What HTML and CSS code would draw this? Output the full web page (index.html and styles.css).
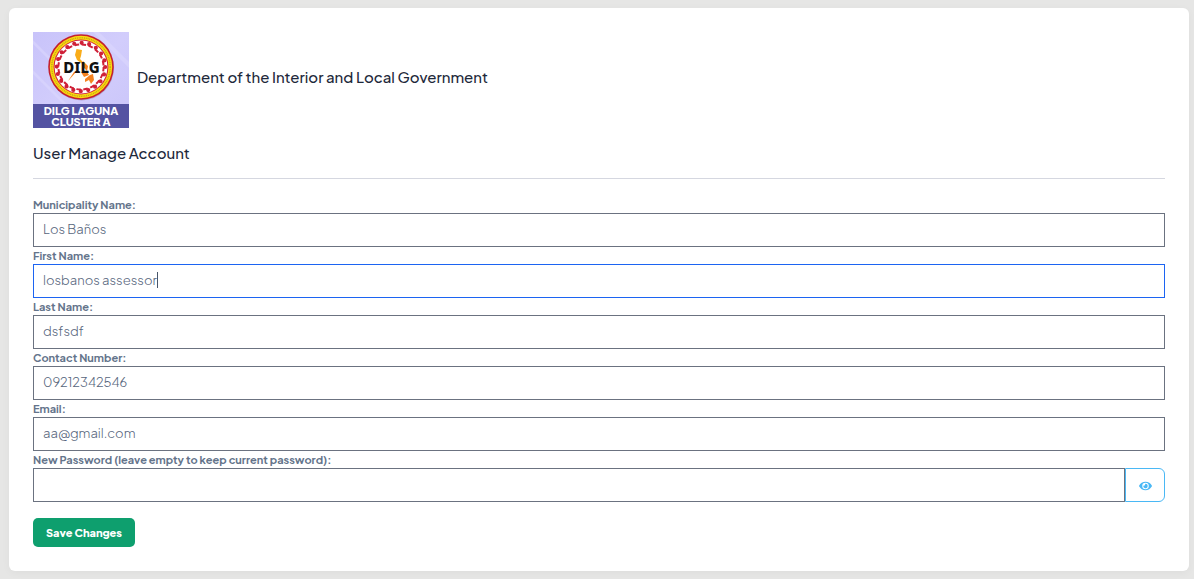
FILE: index.html
```
<!DOCTYPE html>
<html lang="en">
<head>
<meta charset="utf-8">
<meta name="viewport" content="width=device-width, initial-scale=1">
<title>User Manage Account</title>
<link rel="stylesheet" href="styles.css">
</head>
<body>
<main class="card">
  <header class="brand">
    <svg class="logo" viewBox="0 0 96 96" role="img" aria-label="DILG Laguna Cluster A">
      <defs>
        <linearGradient id="bg" x1="0" y1="0" x2="1" y2="1">
          <stop offset="0" stop-color="#c8c3fa"/>
          <stop offset=".5" stop-color="#d2cdfc"/>
          <stop offset="1" stop-color="#cac5f9"/>
        </linearGradient>
      </defs>
      <rect width="96" height="96" fill="url(#bg)"/>
      <path d="M0 38L34 72H30L0 42ZM60 0L96 36V30L66 0ZM0 12L20 32V28L0 8Z" fill="#dedafe" opacity=".5"/>
      <circle cx="48.500" cy="36" r="32.500" fill="#7d6f9c" opacity=".4"/>
      <circle cx="48" cy="35" r="32.800" fill="#c4202f"/>
      <circle cx="48" cy="35" r="31.200" fill="#fbd90f"/>
      <circle cx="48" cy="35" r="29.200" fill="none" stroke="#8c7420" stroke-width="1.400" stroke-dasharray="1 .8" opacity=".5"/>
      <circle cx="48" cy="35" r="27.400" fill="#d0213a"/>
      <circle cx="48" cy="35" r="26.400" fill="#fff"/>
      <circle cx="48" cy="35" r="24.200" fill="none" stroke="#cf2038" stroke-width="4.200" stroke-linecap="round" stroke-dasharray="0 7.600"/>
      <circle cx="48" cy="35" r="22.600" fill="none" stroke="#cf2038" stroke-width="2" stroke-dasharray="4.500 2.600"/>
      <path d="M43.500 17L49 18L48 24L47 27L50 30L52 33L48 31L44 28L42 23Z" fill="#f9ac19"/>
      <path d="M50 29L55 34L54 39L51 36ZM43 40L36 48L35 49L41 40ZM48 40L54 40L56 43L51 45ZM52 47L57 43L60 42L61 48L58 52L56 48L52 50Z" fill="#f58220"/>
      <text x="48.500" y="40.500" text-anchor="middle" class="logo-seal">DILG</text>
      <rect y="72" width="96" height="24" fill="#5453a2"/>
      <text x="48" y="83" text-anchor="middle" class="logo-name">DILG LAGUNA</text>
      <text x="48" y="94" text-anchor="middle" class="logo-name">CLUSTER A</text>
    </svg>
    <h1 class="title">Department of the Interior and Local Government</h1>
  </header>
  <h2 class="title section-title">User Manage Account</h2>
  <form class="form">
    <label class="label" for="municipality">Municipality Name:</label>
    <input class="input" id="municipality" type="text" value="Los Baños">
    <label class="label" for="first">First Name:</label>
    <div class="active-field">
      <input class="input input-active" id="first" type="text" value="losbanos assessor">
      <span class="caret" aria-hidden="true"></span>
    </div>
    <label class="label" for="last">Last Name:</label>
    <input class="input" id="last" type="text" value="dsfsdf">
    <label class="label" for="contact">Contact Number:</label>
    <input class="input" id="contact" type="tel" value="09212342546">
    <label class="label" for="email">Email:</label>
    <input class="input" id="email" type="email" value="aa@gmail.com">
    <label class="label" for="password">New Password (leave empty to keep current password):</label>
    <div class="input-group">
      <input class="input" id="password" type="password">
      <button class="reveal" type="button" aria-label="Show password">
        <svg class="eye" viewBox="0 0 576 512"><path fill="currentColor" d="M573 241C518 136 411 64 288 64S58 136 3 241a32 32 0 0 0 0 30c55 105 162 177 285 177s230-72 285-177a32 32 0 0 0 0-30zM288 400a144 144 0 1 1 144-144 144 144 0 0 1-144 144zm0-240a95 95 0 0 0-25 4 48 48 0 0 1-67 67 96 96 0 1 0 92-71z"/></svg>
      </button>
    </div>
    <button class="save" type="submit">Save Changes</button>
  </form>
</main>
</body>
</html>
```
FILE: styles.css
```
* {
  box-sizing: border-box;
}

body {
  margin: 0;
  padding: 8px 5px 8px 9px;
  background: #e6e6e5;
  font-family: "Plus Jakarta Sans", Inter, sans-serif;
  color: #1e293b;
}

.card {
  padding: 24px;
  background: #fff;
  border-radius: 6px;
  box-shadow: 0 2px 8px rgba(0, 0, 0, 0.04);
}

.brand {
  display: flex;
  align-items: center;
  gap: 8px;
}

.logo {
  width: 96px;
  height: 96px;
  flex: none;
}

.logo-seal {
  font: 800 15px "Noto Sans", sans-serif;
  fill: #111;
}

.logo-name {
  font: 800 11px "Plus Jakarta Sans", Inter, sans-serif;
  fill: #fff;
}

.title {
  margin: 0;
  font-size: 15px;
  line-height: 20px;
  font-weight: 500;
}

.brand .title {
  padding-bottom: 6px;
}

.section-title {
  margin-top: 15px;
  padding-bottom: 15px;
  border-bottom: 1px solid #d5d7e0;
}

.form {
  display: flex;
  flex-direction: column;
  margin-top: 17px;
}

.label {
  font-size: 11px;
  line-height: 17px;
  font-weight: 700;
  color: #64748b;
}

.input {
  width: 100%;
  height: 34px;
  padding: 0 9px 2px;
  border: 1px solid #6b7280;
  border-radius: 0;
  background: #fff;
  color: #56657c;
  font-family: inherit;
  font-size: 13px;
  font-weight: 300;
  outline: none;
}

.active-field {
  position: relative;
  display: flex;
}

.input-active {
  border-color: #1c64f2;
  caret-color: transparent;
}

.caret {
  position: absolute;
  top: 8px;
  left: 124px;
  width: 1px;
  height: 16px;
  background: #475569;
}

.input-group {
  display: flex;
}

.reveal {
  display: flex;
  flex: none;
  align-items: center;
  justify-content: center;
  width: 40px;
  padding: 2px 0 0;
  border: 1px solid #4ab8f5;
  border-radius: 0 6px 6px 0;
  background: #fff;
  color: #4ab8f5;
}

.eye {
  width: 13px;
  height: 12px;
}

.save {
  align-self: flex-start;
  margin-top: 16px;
  padding: 0 13px;
  border: 0;
  border-radius: 5px;
  background: #0e9f6e;
  color: #fff;
  font-family: inherit;
  font-size: 11px;
  line-height: 29px;
  font-weight: 800;
}
```
